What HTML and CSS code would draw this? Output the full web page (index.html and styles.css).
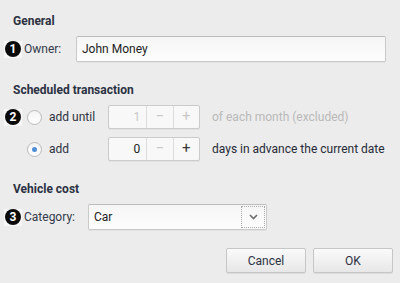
FILE: index.html
```html
<!DOCTYPE html>
<html lang="en">
<head>
  <meta charset="UTF-8" />
  <title>Vehicle cost settings</title>
  <link rel="stylesheet" href="styles.css">
</head>
<body>
  <div class="dialog">
    <!-- General -->
    <div class="heading first">General</div>
    <div class="row owner-row">
      <span class="badge"><span>1</span></span>
      <label class="label owner-label">Owner:</label>
      <input class="field owner-field" type="text" value="John Money" />
    </div>

    <!-- Scheduled transaction -->
    <div class="heading">Scheduled transaction</div>
    <div class="row sched-row">
      <span class="badge"><span>2</span></span>
      <span class="radio"></span>
      <span class="radio-label">add until</span>
      <div class="spinner disabled">
        <span class="spin-value">1</span>
        <span class="spin-btn">&minus;</span>
        <span class="spin-btn">+</span>
      </div>
      <span class="hint muted">of each month (excluded)</span>
    </div>
    <div class="row sched-row second">
      <span class="badge empty"></span>
      <span class="radio checked"></span>
      <span class="radio-label">add</span>
      <div class="spinner">
        <span class="spin-value">0</span>
        <span class="spin-btn off">&minus;</span>
        <span class="spin-btn">+</span>
      </div>
      <span class="hint">days in advance the current date</span>
    </div>

    <!-- Vehicle cost -->
    <div class="heading">Vehicle cost</div>
    <div class="row cat-row">
      <span class="badge"><span>3</span></span>
      <label class="label cat-label">Category:</label>
      <div class="field select">
        <span class="select-text">Car</span>
        <span class="select-btn">
          <svg width="9" height="6" viewBox="0 0 9 6"><path d="M1 1 L4.5 4.5 L8 1" fill="none" stroke="#6d6d6d" stroke-width="1.6"/></svg>
        </span>
      </div>
    </div>

    <div class="actions">
      <button class="btn">Cancel</button>
      <button class="btn">OK</button>
    </div>
  </div>
</body>
</html>
```

FILE: styles.css
```css
body {
    margin: 0;
    padding: 0;
    background-color: #ececec;
    font-family: Roboto, "Liberation Sans", sans-serif;
    font-size: 12px;
    color: #2e3240;
}

.dialog {
    width: 400px;
    height: 283px;
    padding-top: 14px;
    box-sizing: border-box;
}

/* Section headings */
.heading {
    margin: 21px 0 8px 13px;
    height: 14px;
    line-height: 14px;
    font-weight: bold;
    color: #2b3142;
}

.heading.first {
    margin-top: 0;
}

.row {
    display: flex;
    align-items: center;
}

/* Numbered markers */
.badge {
    width: 18px;
    height: 17px;
    margin-left: 4px;
    background: #f7f7f7;
    display: flex;
    align-items: center;
    justify-content: center;
    flex-shrink: 0;
}

.badge span {
    width: 16px;
    height: 16px;
    border-radius: 50%;
    background: #0a0a0a;
    color: #fff;
    font-weight: bold;
    font-size: 12px;
    line-height: 16px;
    text-align: center;
}

.badge.empty {
    background: none;
}

.label {
    margin-left: 2px;
    color: #333a4a;
}

.owner-label {
    width: 52px;
}

.cat-label {
    width: 64px;
}

.field {
    height: 26px;
    box-sizing: border-box;
    border: 1px solid #c9c9c9;
    border-top-color: #bcbcbc;
    border-radius: 2px;
    background: linear-gradient(#f6f6f6, #fdfdfd);
    box-shadow: 0 1px 0 #e2e2e2;
    font-family: inherit;
    font-size: 12px;
    color: #222;
}

.owner-field {
    width: 310px;
    padding: 0 5px;
    outline: none;
}

/* Scheduled transaction rows */
.sched-row {
    height: 24px;
}

.sched-row.second {
    margin-top: 8px;
}

.radio {
    width: 13px;
    height: 13px;
    margin-left: 5px;
    border: 1px solid #b9b9b9;
    border-radius: 50%;
    background: linear-gradient(#f4f4f4, #ffffff);
    display: flex;
    align-items: center;
    justify-content: center;
}

.radio.checked::after {
    content: "";
    width: 5px;
    height: 5px;
    border-radius: 50%;
    background: #4f8fd6;
}

.radio-label {
    width: 59px;
    margin-left: 7px;
    color: #2e3240;
}

.spinner {
    display: flex;
    width: 92px;
    height: 24px;
    box-sizing: border-box;
    border: 1px solid #cbcbcb;
    border-radius: 2px;
    background: #f8f8f8;
    box-shadow: 0 1px 0 #e2e2e2;
}

.spin-value {
    width: 38px;
    padding-right: 6px;
    box-sizing: border-box;
    text-align: right;
    line-height: 22px;
    color: #222;
}

.spin-btn {
    width: 26px;
    border-left: 1px solid #dcdcdc;
    text-align: center;
    line-height: 21px;
    font-size: 15px;
    color: #3a3a3a;
}

.spin-btn.off,
.spinner.disabled .spin-btn,
.spinner.disabled .spin-value {
    color: #c8c8c8;
}

.hint {
    margin-left: 12px;
    color: #262a36;
}

.hint.muted {
    color: #b9b9b9;
}

/* Category select */
.select {
    width: 179px;
    display: flex;
    align-items: center;
    justify-content: space-between;
    padding: 0 1px 0 5px;
}

.select-btn {
    width: 22px;
    height: 20px;
    border: 1px dotted #a9a9a9;
    display: flex;
    align-items: center;
    justify-content: center;
}

/* Dialog buttons */
.actions {
    display: flex;
    justify-content: flex-end;
    gap: 7px;
    margin: 18px 7px 0 0;
}

.btn {
    width: 80px;
    height: 25px;
    border: 1px solid #c6c6c6;
    border-radius: 2px;
    background: linear-gradient(#fafafa, #e7e7e7);
    box-shadow: 0 1px 0 #dcdcdc;
    font-family: inherit;
    font-size: 12px;
    color: #2b3142;
}
```
